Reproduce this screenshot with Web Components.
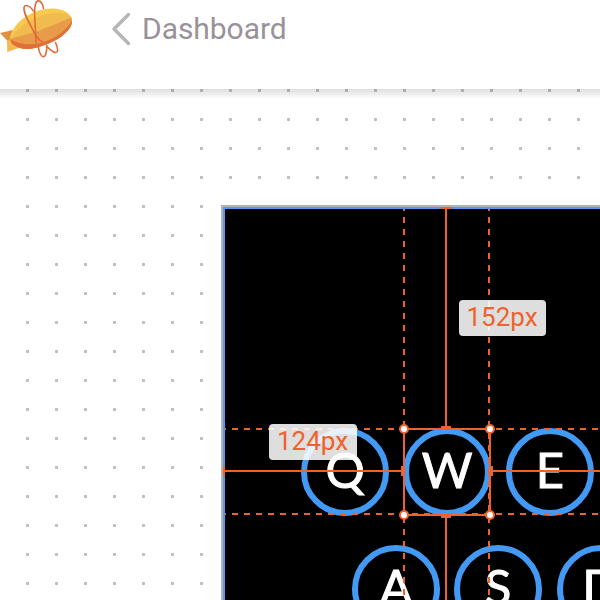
<!DOCTYPE html>
<html lang="en">
<head>
<meta charset="utf-8">
<title>Dashboard</title>
<style>
html,body{margin:0;width:600px;height:600px;overflow:hidden;background:#fff;font-family:Roboto,sans-serif}
</style>
</head>
<body>
<editor-app></editor-app>
<script>
const define=(name,html)=>customElements.define(name,class extends HTMLElement{
  constructor(){
    super();
    const t=document.createElement('template');
    t.innerHTML=html;
    this.attachShadow({mode:'open'}).append(t.content.cloneNode(true));
  }
});

define('zeppelin-logo',`<style>:host{display:block;width:74px;height:60px;flex:none}svg{display:block}</style>
<svg width="74" height="60" viewBox="0 0 74 60">
  <defs><clipPath id="b"><path d="M10 38C12 25 27 12 45 9C60 6.500 72 12 72 21C72 31 56 43 35 48C21 51 10 46 10 38Z"/></clipPath></defs>
  <path d="M0 33L13 30L11 41L7 40.500Z" fill="#e38f42"/>
  <path d="M7 40.500L11 39L20 47.500L7.300 52Z" fill="#f3b84e"/>
  <g clip-path="url(#b)">
    <path d="M0 0H74V60H0Z" fill="#f7c94e"/>
    <path d="M11 41C14 29 30 18 48 14C60 11.500 68 13 72 19V60H8Z" fill="#f0bc4f"/>
    <path d="M9 39C31 34 53 26 73 16.500V55H5Z" fill="#e89c49"/>
    <path d="M9 39C20 45 33 46 45 41.500C56 38 67 30 73 19V60H8Z" fill="#e07039"/>
  </g>
  <g fill="none" stroke="#de6c3b" stroke-width="1.600" stroke-linecap="round">
    <path d="M33.500 11C30.500 6 24.500 3.500 24 7.500C23.500 13 28 21 34 32C37 37.500 39.500 41.500 42.500 41.500"/>
    <path d="M43.500 8.500C43 4 40.500.9 38.500.9C35 .9 34.500 7 34.700 16L36 42.500"/>
    <path d="M38.500 47.500C39 53 41.500 56.800 43.500 56.800C45.500 56.800 47 52 46.800 45.500"/>
    <path d="M47.500 47C51 51 56 54 57.300 51.500C58 49.500 57 46 55.500 42.500"/>
  </g>
</svg>`);

define('back-link',`<style>:host{display:flex;align-items:center;gap:11px;color:#999399}svg{display:block}
.text{font:30px/36px Roboto,sans-serif;white-space:nowrap;letter-spacing:-.05px}</style>
<svg width="20" height="34" viewBox="0 0 20 34"><path d="M17.500 2.500L3 17L17.500 31.500" fill="none" stroke="#b8b5b8" stroke-width="3.400" stroke-linecap="round" stroke-linejoin="round"/></svg>
<span class="text"><slot></slot></span>`);

define('app-header',`<style>:host{display:flex;box-sizing:border-box;height:89px;padding-bottom:29px;background:#fff;align-items:center;gap:37px}back-link{margin-top:-2px}</style>
<zeppelin-logo></zeppelin-logo><back-link>Dashboard</back-link>`);

define('key-cap',`<style>:host{position:absolute;box-sizing:border-box;width:88px;height:88px;border:6px solid #439af5;border-radius:50%;display:flex;align-items:center;justify-content:center;color:#fff;font:49px/76px Lato,sans-serif;-webkit-text-stroke:1px #fff}
span{display:block;margin-top:-6px}</style><span><slot></slot></span>`);

define('measure-label',`<style>:host{position:absolute;display:flex;box-sizing:border-box;width:87px;height:36px;align-items:center;justify-content:center;border-radius:4px;background:rgba(255,255,255,.87);color:#f0622d;font:26px/34px Roboto,sans-serif;padding:0 1px 2px 0}</style><slot></slot>`);

define('measure-guides',`<style>:host{display:block;position:absolute;inset:0}svg{display:block}</style>
<svg width="600" height="511" viewBox="0 89 600 511" fill="none" stroke="#f0622d" stroke-width="2" shape-rendering="crispEdges">
  <g stroke-dasharray="6 6">
    <path d="M404 209V600M489 209V600" stroke-dashoffset="4"/>
    <path d="M225 429H600M225 514H600" stroke-dashoffset="5"/>
  </g>
  <path d="M446 209V429M446 515V600M225 471H404M490 471H600"/>
  <path d="M404 429H490V515H404Z"/>
  <g fill="#f0622d" stroke="none">
    <path d="M441 207h10v2h-10zM223 466h2v10h-2zM441 426h10v4h-10zM401 466h4v10h-4zM489 466h4v10h-4zM441 514h10v4h-10z"/>
  </g>
  <g fill="#fff" shape-rendering="auto">
    <circle cx="404" cy="429" r="4"/><circle cx="490" cy="429" r="4"/>
    <circle cx="404" cy="515" r="4"/><circle cx="490" cy="515" r="4"/>
  </g>
</svg>`);

define('design-stage',`<style>:host{display:block;position:relative;flex:1;overflow:hidden;background:#fff}
.grid{position:absolute;inset:0}
.shade{position:absolute;inset:0 0 auto;height:10px;background:linear-gradient(rgba(0,0,0,.125),rgba(0,0,0,.075) 45%,rgba(0,0,0,0))}
.board{position:absolute;left:221px;top:116px;width:420px;height:440px;background:#000;border:2px solid #b4b1b4;outline:2px solid #5797ef;outline-offset:-4px}</style>
<svg class="grid" width="600" height="511"><defs><pattern id="p" x="26" width="29" height="29" patternUnits="userSpaceOnUse"><path d="M0 0h3v3H0z" fill="#c4c0c3"/></pattern></defs><rect width="600" height="511" fill="url(#p)"/></svg>
<div class="shade"></div>
<div class="board"></div>
<key-cap style="left:301px;top:339px">Q</key-cap>
<key-cap style="left:403px;top:339px">W</key-cap>
<key-cap style="left:506px;top:339px">E</key-cap>
<key-cap style="left:352px;top:456px">A</key-cap>
<key-cap style="left:454px;top:456px">S</key-cap>
<key-cap style="left:557px;top:456px">D</key-cap>
<measure-guides></measure-guides>
<measure-label style="left:459px;top:211px">152px</measure-label>
<measure-label style="left:269px;top:335px;width:88px">124px</measure-label>`);

define('editor-app',`<style>:host{display:flex;flex-direction:column;width:600px;height:600px}</style>
<app-header></app-header><design-stage></design-stage>`);
</script>
</body>
</html>
